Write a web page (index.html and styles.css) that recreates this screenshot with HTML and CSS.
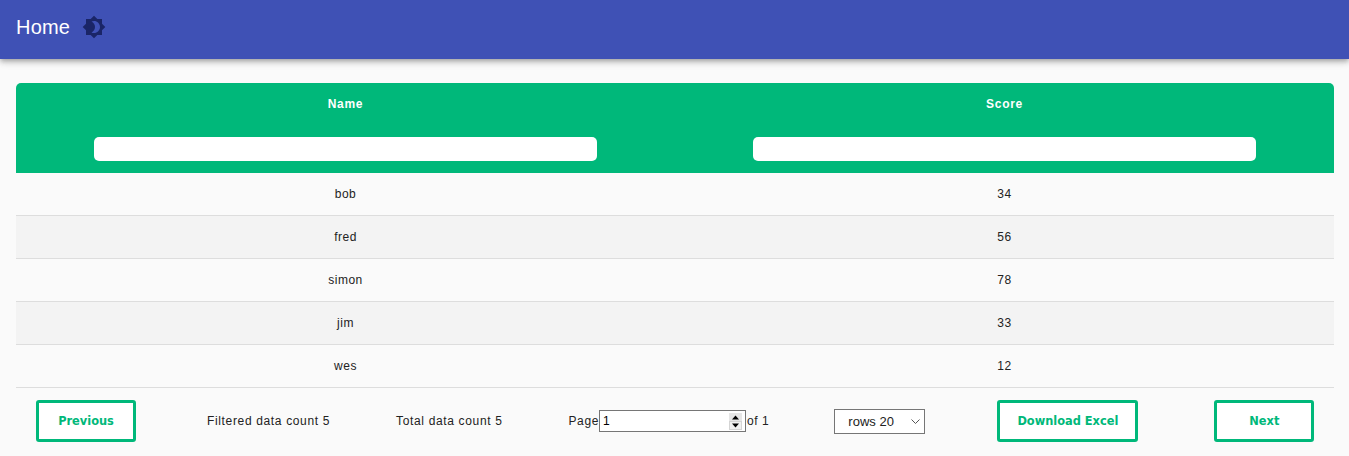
FILE: index.html
```html
<!DOCTYPE html>
<html lang="en">
<head>
    <meta charset="utf-8">
    <title>Home</title>
    <link rel="stylesheet" href="styles.css">
</head>

<body>
    <header class="app-bar">
        <span class="app-title">Home</span>
        <svg class="theme-icon" viewBox="0 0 24 24" width="24" height="24">
            <path d="M20 8.69V4h-4.69L12 .69 8.69 4H4v4.69L.69 12 4 15.31V20h4.69L12 23.31 15.31 20H20v-4.69L23.31 12 20 8.69zM12 18c-.89 0-1.74-.2-2.5-.55C11.56 16.5 13 14.42 13 12s-1.44-4.5-3.5-5.45C10.26 6.2 11.11 6 12 6c3.31 0 6 2.69 6 6s-2.69 6-6 6z"/>
        </svg>
    </header>

    <main class="content">
        <section class="table">
            <div class="table-head">
                <div class="head-cell">
                    <span class="head-label">Name</span>
                    <input class="filter" type="text">
                </div>
                <div class="head-cell">
                    <span class="head-label">Score</span>
                    <input class="filter" type="text">
                </div>
            </div>
            <div class="row"><span>bob</span><span>34</span></div>
            <div class="row alt"><span>fred</span><span>56</span></div>
            <div class="row"><span>simon</span><span>78</span></div>
            <div class="row alt"><span>jim</span><span>33</span></div>
            <div class="row"><span>wes</span><span>12</span></div>
        </section>

        <footer class="pager">
            <button class="btn btn-prev">Previous</button>
            <span class="count count-filtered">Filtered data count 5</span>
            <span class="count count-total">Total data count 5</span>
            <span class="page-jump">Page<input class="page-input" type="number" value="1">of 1</span>
            <select class="rows-select">
                <option>rows 20</option>
            </select>
            <button class="btn btn-excel">Download Excel</button>
            <button class="btn btn-next">Next</button>
        </footer>
    </main>
</body>

</html>
```

FILE: styles.css
```css
html,
body {
    margin: 0;
    padding: 0;
    height: 100%;
}

body {
    overflow: hidden;
    background-color: #fafafa;
    color: #222;
    font-family: "Liberation Sans", Arial, sans-serif;
    font-size: 12px;
}

.app-bar {
    display: flex;
    align-items: center;
    gap: 12px;
    height: 59px;
    padding: 0 16px 5px;
    box-sizing: border-box;
    background-color: #3f51b5;
    color: #fff;
    box-shadow: 0 2px 4px -1px rgba(0, 0, 0, .2), 0 4px 5px 0 rgba(0, 0, 0, .14), 0 1px 10px 0 rgba(0, 0, 0, .12);
}

.app-title {
    font-size: 20px;
    letter-spacing: .2px;
}

.theme-icon {
    fill: #1a2567;
}

.content {
    padding: 24px 15px 0 16px;
}

.table-head {
    display: grid;
    grid-template-columns: 1fr 1fr;
    height: 90px;
    border-radius: 5px 5px 0 0;
    background-color: #00b87a;
}

.head-cell {
    display: flex;
    flex-direction: column;
    align-items: center;
    padding-top: 15px;
}

.head-label {
    margin-bottom: 26px;
    color: #fff;
    font-weight: bold;
    line-height: 13px;
    letter-spacing: .7px;
}

.filter {
    box-sizing: border-box;
    width: 503px;
    height: 24px;
    border: 0;
    border-radius: 5px;
    background-color: #fff;
}

.row {
    display: grid;
    grid-template-columns: 1fr 1fr;
    align-items: center;
    height: 43px;
    box-sizing: border-box;
    border-bottom: 1px solid #ddd;
    text-align: center;
    letter-spacing: .5px;
}

.row.alt {
    background-color: #f3f3f3;
}

.pager {
    display: flex;
    align-items: center;
    height: 66px;
    padding: 0 20px;
    white-space: nowrap;
}

.pager > * {
    flex: none;
}

.btn {
    box-sizing: border-box;
    height: 42px;
    width: 100px;
    border: 3px solid #00b87a;
    border-radius: 3px;
    background-color: #fff;
    color: #00b87a;
    font-family: "DejaVu Sans", sans-serif;
    font-size: 11.4px;
    font-weight: bold;
}

.btn-excel {
    width: 141px;
    margin-left: 72px;
}

.btn-next {
    margin-left: 76px;
}

.count {
    letter-spacing: .65px;
}

.count-filtered {
    margin-left: 71px;
}

.count-total {
    margin-left: 66px;
}

.page-jump {
    display: flex;
    align-items: center;
    margin-left: 66px;
    letter-spacing: .6px;
}

.page-input {
    box-sizing: border-box;
    width: 147px;
    height: 22px;
    margin: 0 1px 0 0;
    padding: 1px 3px;
    border: 1px solid #767676;
    background-color: #fff;
    font-family: inherit;
    font-size: 12px;
}

.page-input::-webkit-inner-spin-button {
    appearance: none;
    width: 13px;
    height: 17px;
    opacity: 1;
    background: url("data:image/svg+xml,%3Csvg xmlns='http://www.w3.org/2000/svg' width='13' height='17'%3E%3Crect width='13' height='8' fill='%23e6e6e6'/%3E%3Crect y='8' width='13' height='9' fill='%23d4d4d4'/%3E%3Crect x='1' y='9' width='11' height='7' fill='%23f0f0f0'/%3E%3Cpath d='M6.5 2.5L10 6.500H3z'/%3E%3Cpath d='M3 10.500h7L6.500 14.500z'/%3E%3C/svg%3E") no-repeat center;
}

.rows-select {
    appearance: none;
    box-sizing: border-box;
    width: 91px;
    height: 25px;
    margin-left: 65px;
    padding-left: 13px;
    border: 1px solid #767676;
    border-radius: 0;
    background: #fff url("data:image/svg+xml,%3Csvg xmlns='http://www.w3.org/2000/svg' width='9' height='5'%3E%3Cpath d='M.5.5l4 4 4-4' fill='none' stroke='%23555'/%3E%3C/svg%3E") no-repeat right 4px center;
    color: #222;
    font-family: inherit;
    font-size: 13px;
}
```
